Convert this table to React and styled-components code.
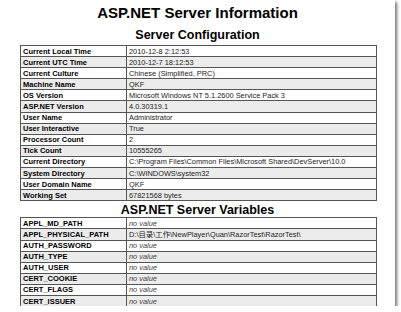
import styled, { createGlobalStyle } from 'styled-components'

const config = [
  ['Current Local Time', '2010-12-8 2:12:53'],
  ['Current UTC Time', '2010-12-7 18:12:53'],
  ['Current Culture', 'Chinese (Simplified, PRC)'],
  ['Machine Name', 'QKF'],
  ['OS Version', 'Microsoft Windows NT 5.1.2600 Service Pack 3'],
  ['ASP.NET Version', '4.0.30319.1'],
  ['User Name', 'Administrator'],
  ['User Interactive', 'True'],
  ['Processor Count', '2'],
  ['Tick Count', '10555265'],
  ['Current Directory', 'C:\\Program Files\\Common Files\\Microsoft Shared\\DevServer\\10.0'],
  ['System Directory', 'C:\\WINDOWS\\system32'],
  ['User Domain Name', 'QKF'],
  ['Working Set', '67821568 bytes'],
]

const variables = [
  ['APPL_MD_PATH', null],
  ['APPL_PHYSICAL_PATH', 'D:\\目录\\工作\\NewPlayer\\Quan\\RazorTest\\RazorTest\\'],
  ['AUTH_PASSWORD', null],
  ['AUTH_TYPE', null],
  ['AUTH_USER', null],
  ['CERT_COOKIE', null],
  ['CERT_FLAGS', null],
  ['CERT_ISSUER', null],
]

export default function App() {
  return (
    <>
      <GlobalStyle />
      <Window>
        <Title>ASP.NET Server Information</Title>
        <Heading>Server Configuration</Heading>
        <InfoTable rows={config} />
        <Heading $tight>ASP.NET Server Variables</Heading>
        <InfoTable rows={variables} />
      </Window>
    </>
  )
}

function InfoTable({ rows }) {
  return (
    <Table>
      <tbody>
        {rows.map(([name, value], index) => (
          <Row key={name} $shaded={index % 2 === 1}>
            <Label>{name}</Label>
            {value === null ? <Empty>no value</Empty> : <Value>{value}</Value>}
          </Row>
        ))}
      </tbody>
    </Table>
  )
}

const GlobalStyle = createGlobalStyle`
  body {
    margin: 0;
    background: #fff;
    font-family: "Liberation Sans", Arial, "Noto Sans CJK SC", sans-serif;
    color: #111;
  }
`

const Window = styled.div`
  width: 395px;
  height: 306px;
  overflow: hidden;
  background: #fff;
  box-shadow: 2px 2px 3px rgba(0, 0, 0, 0.55);
  padding-top: 4px;
  box-sizing: border-box;
`

const Title = styled.h1`
  margin: 0;
  font-size: 15px;
  line-height: 18px;
  font-weight: bold;
  text-align: center;
  color: #000;
`

const Heading = styled.h2`
  margin: ${props => (props.$tight ? '2px 0 0 0' : '6px 0 3px 0')};
  font-size: 12.5px;
  line-height: 14px;
  font-weight: bold;
  text-align: center;
  color: #000;
`

const Table = styled.table`
  margin-left: 20px;
  width: 357px;
  border-collapse: collapse;
  border: 1px solid #555;
  table-layout: fixed;
`

const Row = styled.tr`
  height: 11.1px;
  background: ${props => (props.$shaded ? '#ebebeb' : '#fff')};
`

const Label = styled.td`
  width: 103px;
  padding: 0 0 0 2px;
  border: 1px solid #555;
  font-size: 7.5px;
  line-height: 9px;
  font-weight: bold;
  white-space: nowrap;
  overflow: hidden;
  color: #000;
`

const Value = styled.td`
  padding: 0 0 0 2px;
  border: 1px solid #555;
  font-size: 7.4px;
  line-height: 9px;
  white-space: nowrap;
  overflow: hidden;
  color: #222;
`

const Empty = styled(Value)`
  font-style: italic;
  color: #444;
`
